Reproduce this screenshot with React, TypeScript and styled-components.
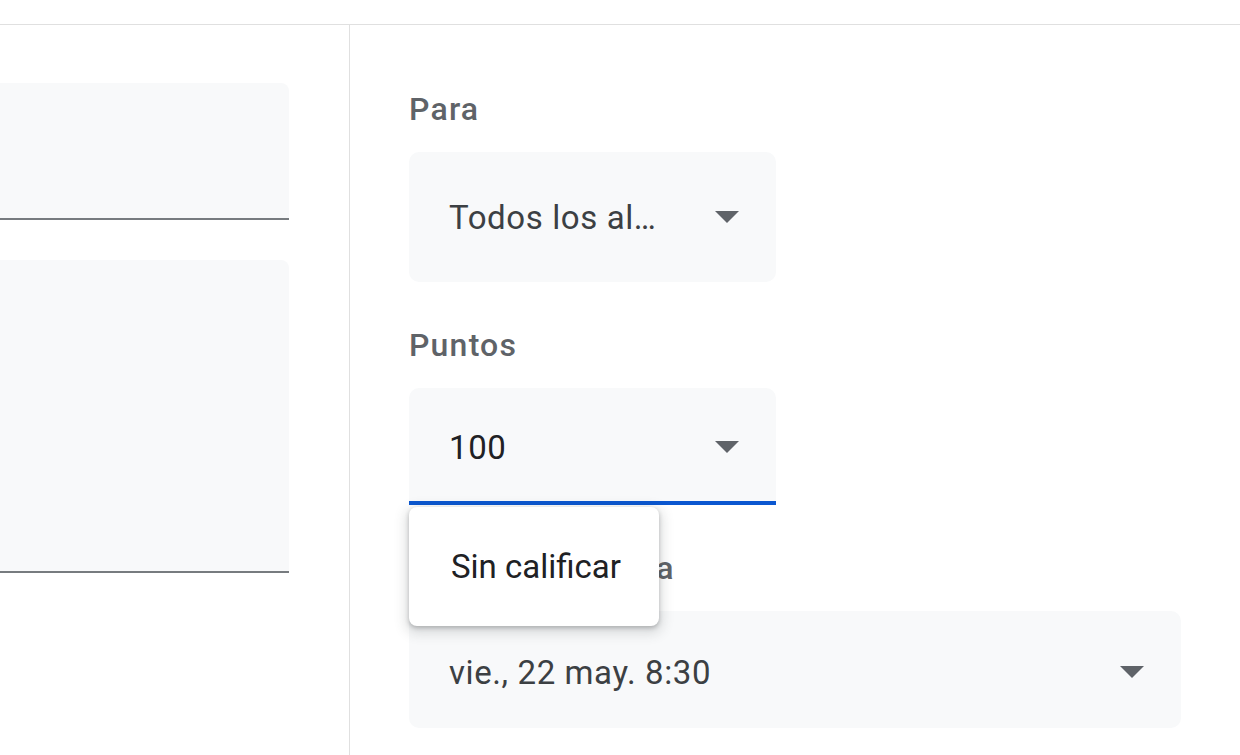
import React from 'react'
import styled, { createGlobalStyle } from 'styled-components'

const GlobalStyle = createGlobalStyle`
  html, body {
    margin: 0;
    padding: 0;
    background: #fff;
    font-family: Roboto, "Noto Sans", Arial, sans-serif;
  }
  * {
    box-sizing: border-box;
  }
`
const Page = styled.div`
  display: flex;
  flex-direction: column;
  height: 755px;
  overflow: hidden;
`
const TopBar = styled.header`
  height: 25px;
  flex-shrink: 0;
  border-bottom: 1px solid #e0e0e0;
`
const Main = styled.main`
  flex: 1;
  display: flex;
`
const LeftPane = styled.section`
  width: 350px;
  flex-shrink: 0;
  border-right: 1px solid #e0e0e0;
  padding-top: 58px;
  display: flex;
  flex-direction: column;
  gap: 40px;
`
const TextField = styled.div<{ $height: number }>`
  height: ${p => p.$height}px;
  margin-right: 60px;
  background: #f8f9fa;
  border-bottom: 2px solid #777b7f;
  border-radius: 0 8px 0 0;
`
const RightPane = styled.section`
  flex: 1;
  padding: 64px 0 0 59px;
  display: flex;
  flex-direction: column;
  gap: 43px;
`
const Group = styled.div`
  display: flex;
  flex-direction: column;
  gap: 23px;
`
const Label = styled.div`
  height: 40px;
  line-height: 40px;
  font-size: 32px;
  font-weight: 500;
  letter-spacing: 1.2px;
  color: #5f6368;
  white-space: nowrap;
`
const SelectWrap = styled.div`
  position: relative;
`
const Select = styled.div<{ $width: number; $height: number; $active?: boolean }>`
  width: ${p => p.$width}px;
  height: ${p => p.$height}px;
  display: flex;
  align-items: center;
  justify-content: space-between;
  padding: ${p => (p.$height < 120 ? 5 : 0)}px 37px 0 40px;
  background: #f8f9fa;
  border-radius: ${p => (p.$active ? '10px 10px 0 0' : '10px')};
  border-bottom: ${p => (p.$active ? '4px solid #0b57d0' : 'none')};
  cursor: pointer;
`
const Value = styled.span<{ $dark?: boolean }>`
  font-size: 33px;
  letter-spacing: 0.6px;
  color: ${p => (p.$dark ? '#202124' : '#3c4043')};
  white-space: nowrap;
`
const Menu = styled.ul`
  position: absolute;
  top: calc(100% + 2px);
  left: 0;
  z-index: 2;
  width: 250px;
  height: 119px;
  margin: 0;
  padding: 0;
  list-style: none;
  background: #fff;
  border-radius: 8px;
  box-shadow: 0 2px 4px rgba(60, 64, 67, 0.3), 0 4px 12px 4px rgba(60, 64, 67, 0.15);
  display: flex;
  align-items: center;
`
const MenuItem = styled.li`
  padding-left: 42px;
  font-size: 33px;
  color: #202124;
  white-space: nowrap;
`

const Arrow = () => (
  <svg width="24" height="12" viewBox="7 10 10 5" aria-hidden="true">
    <path d="M7 10l5 5 5-5z" fill="#5f6368" />
  </svg>
)

const App: React.FC = () => {
  return (
    <Page>
      <GlobalStyle />
      <TopBar />
      <Main>
        <LeftPane>
          <TextField $height={137} />
          <TextField $height={313} />
        </LeftPane>
        <RightPane>
          <Group>
            <Label>Para</Label>
            <Select $width={367} $height={130}>
              <Value>Todos los al…</Value>
              <Arrow />
            </Select>
          </Group>
          <Group>
            <Label>Puntos</Label>
            <SelectWrap>
              <Select $width={367} $height={117} $active>
                <Value $dark>100</Value>
                <Arrow />
              </Select>
              <Menu role="listbox">
                <MenuItem role="option">Sin calificar</MenuItem>
              </Menu>
            </SelectWrap>
          </Group>
          <Group>
            <Label>Fecha de entrega</Label>
            <Select $width={772} $height={117}>
              <Value>vie., 22 may. 8:30</Value>
              <Arrow />
            </Select>
          </Group>
        </RightPane>
      </Main>
    </Page>
  )
}

export default App
